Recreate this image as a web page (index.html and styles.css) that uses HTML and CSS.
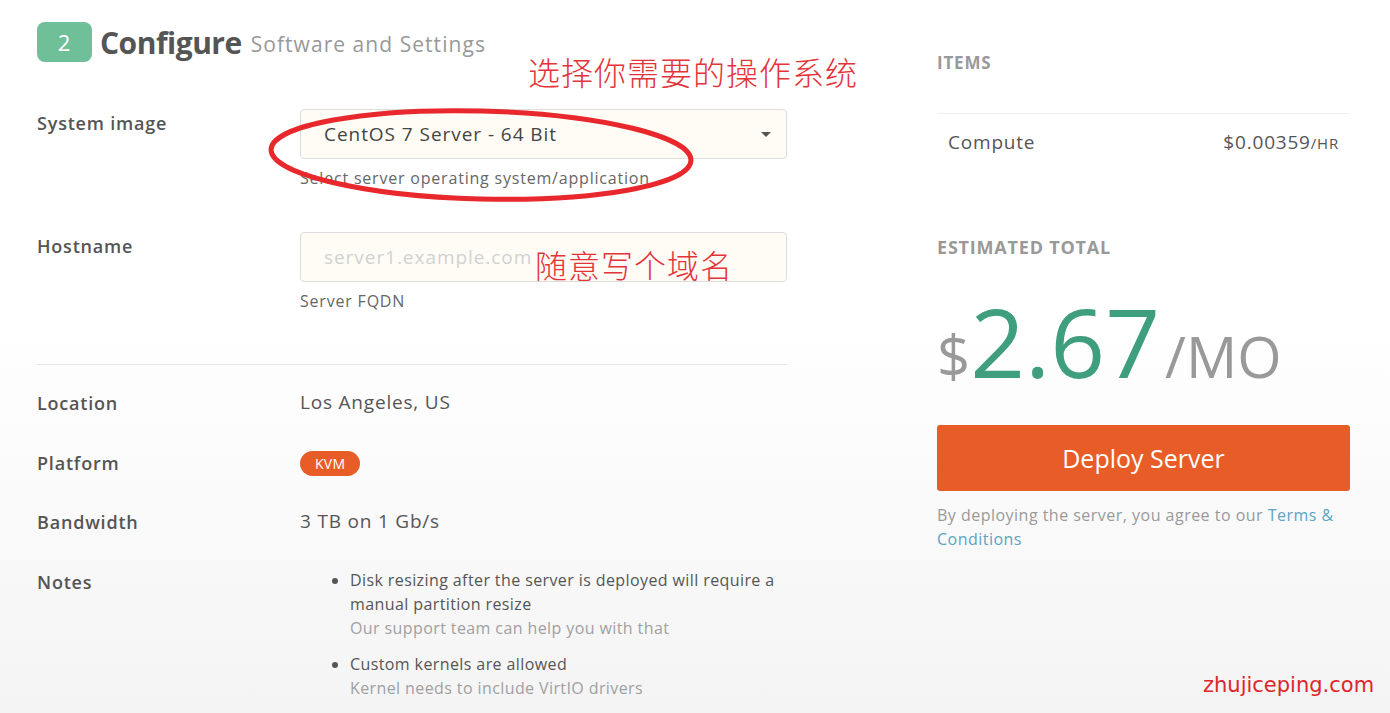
FILE: index.html
```html
<!DOCTYPE html>
<html lang="en">
<head>
    <meta charset="UTF-8">
    <meta name="viewport" content="width=device-width, initial-scale=1.0">
    <title>Deploy New Instance</title>
    <link rel="stylesheet" href="styles.css">
</head>
<body>
    <div class="page">
        <!-- Configure section -->
        <div class="main">
            <div class="step-title">
                <span class="step-num">2</span>
                <span class="step-name">Configure</span>
                <span class="step-sub">Software and Settings</span>
            </div>

            <div class="form-row first">
                <div class="row-label">System image</div>
                <div class="row-field">
                    <div class="select-box">
                        <span>CentOS 7 Server - 64 Bit</span>
                        <span class="caret"></span>
                    </div>
                    <div class="help">Select server operating system/application</div>
                </div>
            </div>

            <div class="form-row">
                <div class="row-label">Hostname</div>
                <div class="row-field">
                    <input type="text" class="text-box" placeholder="server1.example.com">
                    <div class="help">Server FQDN</div>
                </div>
            </div>

            <hr class="divider">

            <div class="info-row">
                <div class="row-label">Location</div>
                <div class="info-value">Los Angeles, US</div>
            </div>
            <div class="info-row">
                <div class="row-label">Platform</div>
                <div class="info-value"><span class="pill">KVM</span></div>
            </div>
            <div class="info-row">
                <div class="row-label">Bandwidth</div>
                <div class="info-value">3 TB on 1 Gb/s</div>
            </div>
            <div class="info-row">
                <div class="row-label">Notes</div>
                <ul class="notes">
                    <li>Disk resizing after the server is deployed will require a manual partition resize
                        <span class="note-sub">Our support team can help you with that</span></li>
                    <li>Custom kernels are allowed
                        <span class="note-sub">Kernel needs to include VirtIO drivers</span></li>
                </ul>
            </div>
        </div>

        <!-- Summary sidebar -->
        <div class="summary">
            <h3 class="sum-head">Items</h3>
            <div class="sum-item">
                <span>Compute</span>
                <span class="sum-price">$0.00359<small>/HR</small></span>
            </div>
            <h3 class="sum-head total-head">Estimated Total</h3>
            <div class="total">
                <span class="cur">$</span><span class="amount">2.67</span><span class="per">/MO</span>
            </div>
            <button class="deploy-btn">Deploy Server</button>
            <p class="terms">By deploying the server, you agree to our <a href="#">Terms &amp; Conditions</a></p>
        </div>
    </div>

    <!-- red annotations on top of the screenshot -->
    <svg class="mark-ellipse" width="440" height="110" viewBox="0 0 440 110">
        <ellipse cx="217" cy="55" rx="210" ry="44" fill="none" stroke="#e8282c" stroke-width="5" transform="rotate(1.5 217 55)"/>
    </svg>
    <div class="note-cn note-os">选择你需要的操作系统</div>
    <div class="note-cn note-host">随意写个域名</div>
    <div class="watermark">zhujiceping.com</div>
</body>
</html>
```

FILE: styles.css
```css
body {
    margin: 0;
    font-family: "Open Sans", "Noto Sans", sans-serif;
    letter-spacing: 0.05em;
    color: #555;
    background: linear-gradient(#ffffff 0%, #ffffff 45%, #f4f4f4 100%);
    min-height: 713px;
    position: relative;
}

.page {
    display: flex;
    padding: 22px 0 0 37px;
}

.main {
    width: 750px;
}

.step-title {
    display: flex;
    align-items: center;
    height: 40px;
}

.step-num {
    width: 55px;
    height: 40px;
    border-radius: 8px;
    background-color: #6fc099;
    color: #fff;
    font-size: 22px;
    display: flex;
    align-items: center;
    justify-content: center;
}

.step-name {
    margin-left: 8px;
    font-size: 30px;
    font-weight: 700;
    color: #555;
    letter-spacing: -0.5px;
}

.step-sub {
    margin-left: 9px;
    margin-top: 4px;
    font-size: 21px;
    letter-spacing: 0.05em;
    color: #999;
}

.form-row {
    display: grid;
    grid-template-columns: 263px 1fr;
    margin-top: 43px;
}

.form-row.first {
    margin-top: 47px;
}

.row-label {
    font-size: 18px;
    font-weight: 600;
    color: #555;
    padding-top: 2px;
}

.select-box,
.text-box {
    box-sizing: border-box;
    width: 487px;
    height: 50px;
    border: 1px solid #ddd;
    border-radius: 4px;
    background-color: #fffcf6;
    font-family: inherit;
    letter-spacing: 0.05em;
    font-size: 19px;
    color: #444;
    padding: 0 15px 0 23px;
}

.select-box {
    display: flex;
    align-items: center;
    justify-content: space-between;
}

.caret {
    width: 0;
    height: 0;
    border-left: 5px solid transparent;
    border-right: 5px solid transparent;
    border-top: 5px solid #555;
}

.text-box::placeholder {
    color: #d2d2d2;
}

.help {
    font-size: 16px;
    color: #666;
    margin-top: 8px;
}

.divider {
    border: none;
    border-top: 1px solid #e6e6e6;
    margin: 52px 0 24px;
}

.info-row {
    display: grid;
    grid-template-columns: 263px 1fr;
    height: 59.5px;
}

.info-value {
    font-size: 19px;
    color: #555;
}

.pill {
    display: inline-block;
    background-color: #e85d27;
    color: #fff;
    font-size: 14px;
    border-radius: 13px;
    padding: 3px 15px;
    letter-spacing: 0.02em;
}

.notes {
    margin: 0;
    padding-left: 50px;
    font-size: 16px;
    line-height: 24px;
    letter-spacing: 0.025em;
    color: #555;
}

.notes li {
    margin-bottom: 12px;
}

.note-sub {
    display: block;
    color: #a0a0a0;
}

.summary {
    width: 413px;
    margin-left: 150px;
    padding-top: 29px;
}

.sum-head {
    margin: 0;
    font-size: 17px;
    font-weight: 700;
    color: #999;
    text-transform: uppercase;
}

.sum-item {
    display: flex;
    justify-content: space-between;
    align-items: baseline;
    border-top: 1px solid #eee;
    margin-top: 39px;
    padding: 15px 11px 0;
    font-size: 19px;
    color: #555;
}

.sum-price small {
    font-size: 15px;
}

.total-head {
    font-size: 18px;
    margin-top: 80px;
}

.total {
    margin-top: 34px;
    line-height: 1;
    white-space: nowrap;
    letter-spacing: 0;
}

.cur {
    font-size: 58px;
    color: #999;
}

.amount {
    font-size: 96px;
    color: #3f9e7d;
}

.per {
    margin-left: 5px;
    font-size: 57px;
    color: #999;
}

.deploy-btn {
    display: block;
    width: 100%;
    height: 66px;
    margin-top: 36px;
    border: none;
    border-radius: 3px;
    background-color: #e85d27;
    color: #fff;
    font-family: inherit;
    font-size: 25px;
    cursor: pointer;
}

.terms {
    margin: 12px 0 0;
    font-size: 16px;
    line-height: 24px;
    letter-spacing: 0.03em;
    color: #999;
}

.terms a {
    color: #5ba4c4;
    text-decoration: none;
}

/* annotations */
.mark-ellipse {
    position: absolute;
    left: 264px;
    top: 100px;
}

.note-cn {
    position: absolute;
    font-family: "Noto Sans CJK SC", sans-serif;
    font-weight: 300;
    color: #e3343a;
    font-size: 32px;
    letter-spacing: 1px;
    line-height: 1;
}

.note-os {
    left: 528px;
    top: 55px;
}

.note-host {
    left: 535px;
    top: 248px;
}

.watermark {
    position: absolute;
    left: 1203px;
    top: 673px;
    font-family: "DejaVu Sans", sans-serif;
    font-size: 21px;
    letter-spacing: 0;
    color: #e0242a;
}
```
